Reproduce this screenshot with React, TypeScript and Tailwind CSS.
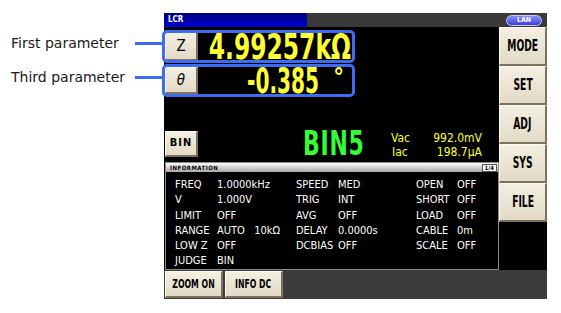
import React from 'react';

const screenFont = { fontFamily: '"DejaVu Sans Condensed", "DejaVu Sans", sans-serif' };

const keyClass =
  'flex items-center justify-center bg-gradient-to-b from-[#f4efe2] to-[#e2dac6] border-t border-l border-t-[#fffaf0] border-l-[#fffaf0] border-r-2 border-b-2 border-r-[#7d715c] border-b-[#7d715c] text-black font-bold';

const SideKey = ({ label }: { label: string }) => (
  <div className={`${keyClass} h-[39px] text-[15px]`}>
    <span className="inline-block scale-x-[0.68]">{label}</span>
  </div>
);

const rows: [string, string, string, string, string, string][] = [
  ['FREQ', '1.0000kHz', 'SPEED', 'MED', 'OPEN', 'OFF'],
  ['V', '1.000V', 'TRIG', 'INT', 'SHORT', 'OFF'],
  ['LIMIT', 'OFF', 'AVG', 'OFF', 'LOAD', 'OFF'],
  ['RANGE', 'AUTO   10kΩ', 'DELAY', '0.0000s', 'CABLE', '0m'],
  ['LOW Z', 'OFF', 'DCBIAS', 'OFF', 'SCALE', 'OFF'],
  ['JUDGE', 'BIN', '', '', '', ''],
];

export default function App() {
  return (
    <div className="relative w-[561px] h-[313px] bg-white overflow-hidden pl-[164px] pt-[13px]">
      {/* Annotations */}
      <div
        className="absolute left-[11px] top-[33px] text-[14px] text-[#1a1a1a] leading-[20px]"
        style={{ fontFamily: '"DejaVu Sans", Verdana, sans-serif' }}
      >
        First parameter
      </div>
      <div
        className="absolute left-[11px] top-[67px] text-[14px] text-[#1a1a1a] leading-[20px]"
        style={{ fontFamily: '"DejaVu Sans", Verdana, sans-serif' }}
      >
        Third parameter
      </div>
      <div className="absolute left-[135px] top-[42px] w-[28px] h-[3px] bg-[#3b6cf2]" />
      <div className="absolute left-[135px] top-[76px] w-[28px] h-[3px] bg-[#3b6cf2]" />
      <div className="absolute left-[162px] top-[30px] w-[193px] h-[33px] border-[3px] border-[#3b6cf2] rounded-[5px] z-10" />
      <div className="absolute left-[162px] top-[64px] w-[193px] h-[33px] border-[3px] border-[#3b6cf2] rounded-[5px] z-10" />

      {/* Instrument screen */}
      <div className="w-[383px] h-[286px] flex flex-col bg-black" style={screenFont}>
        {/* Title bar */}
        <div className="h-[14px] flex">
          <div className="w-[143px] bg-gradient-to-b from-[#00007a] to-[#0000d8] text-white text-[8px] font-bold leading-[14px] pl-[4px]">
            LCR
          </div>
          <div className="flex-1 bg-[#3a3a3a] flex justify-end items-center pr-[5px]">
            <div className="w-[36px] h-[11px] rounded-full bg-gradient-to-b from-[#8a8cff] to-[#3a3fd8] border border-[#c8c8ff] text-white text-[7px] font-bold leading-[9px] text-center">
              LAN
            </div>
          </div>
        </div>

        {/* Body */}
        <div className="flex-1 flex">
          <div className="w-[336px] flex flex-col pl-[1px]">
            {/* First parameter */}
            <div className="mt-[5px] h-[29px] flex items-center">
              <div className={`${keyClass} w-[33px] h-[29px] text-[15px] font-normal`}>Z</div>
              <div className="w-[154px] h-[29px] flex justify-end items-center pr-[1px] text-[#ffff33] text-[28px] font-bold">
                <span className="inline-block leading-[21px] origin-right scale-x-[0.93] scale-y-[1.29]">4.99257kΩ</span>
              </div>
            </div>
            {/* Third parameter */}
            <div className="mt-[6px] h-[27px] flex items-center">
              <div className={`${keyClass} w-[33px] h-[27px] text-[15px] font-normal italic`}>θ</div>
              <div className="w-[154px] h-[27px] flex justify-end items-center pr-[8px] text-[#ffff33] text-[28px] font-bold">
                <span className="inline-block leading-[20px] origin-right scale-x-[0.8] scale-y-[1.29] mr-[14px]">-0.385</span>
                <span className="text-[24px] leading-[20px] self-start mt-[1px]">°</span>
              </div>
            </div>

            {/* Judge row */}
            <div className="mt-[37px] h-[26px] flex items-center">
              <div className={`${keyClass} w-[33px] h-[26px] text-[11px] tracking-[1px]`}>BIN</div>
              <div className="ml-[105px] w-[58px] text-[#33ff33] text-[33px] font-bold leading-[26px]">
                <span className="inline-block origin-left scale-x-[0.74] tracking-[1px]">BIN5</span>
              </div>
              <div className="ml-[30px] text-[#ffff33] text-[12px] leading-[14px] mt-[2px]">
                <div className="flex">
                  <span className="w-[37px]">Vac</span>
                  <span className="w-[54px] text-right">992.0mV</span>
                </div>
                <div className="flex">
                  <span className="w-[37px] pl-[1px]">Iac</span>
                  <span className="w-[54px] text-right">198.7μA</span>
                </div>
              </div>
            </div>

            {/* Information panel */}
            <div className="mt-[5px] w-[334px] flex-1 border border-[#8a8a8a] flex flex-col">
              <div className="h-[9px] bg-gradient-to-b from-white to-[#a8a8a8] flex items-center justify-between pl-[4px] pr-[1px]">
                <span className="text-[6px] font-bold leading-[8px] text-black tracking-[0.5px]">INFORMATION</span>
                <span className="bg-white border border-[#555] text-[6px] font-bold leading-[6px] px-[2px] text-black">
                  1/4
                </span>
              </div>
              <div className="pt-[5px] pl-[9px] text-white text-[11px] leading-[15.3px]">
                {rows.map((r, i) => (
                  <div key={i} className="flex whitespace-pre">
                    <span className="w-[42px]">{r[0]}</span>
                    <span className="w-[79px]">{r[1]}</span>
                    <span className="w-[42px]">{r[2]}</span>
                    <span className="w-[78px]">{r[3]}</span>
                    <span className="w-[41px]">{r[4]}</span>
                    <span>{r[5]}</span>
                  </div>
                ))}
              </div>
            </div>
          </div>

          {/* Side keys */}
          <div className="flex-1 flex flex-col">
            <SideKey label="MODE" />
            <SideKey label="SET" />
            <SideKey label="ADJ" />
            <SideKey label="SYS" />
            <SideKey label="FILE" />
          </div>
        </div>

        {/* Bottom bar */}
        <div className="h-[29px] bg-[#3c3c3c] flex items-center pl-[1px] gap-[2px]">
          <div className={`${keyClass} w-[58px] h-[27px] text-[12px]`}>
            <span className="inline-block scale-x-[0.72] whitespace-nowrap">ZOOM ON</span>
          </div>
          <div className={`${keyClass} w-[58px] h-[27px] text-[12px]`}>
            <span className="inline-block scale-x-[0.72] whitespace-nowrap">INFO DC</span>
          </div>
        </div>
      </div>
    </div>
  );
}
